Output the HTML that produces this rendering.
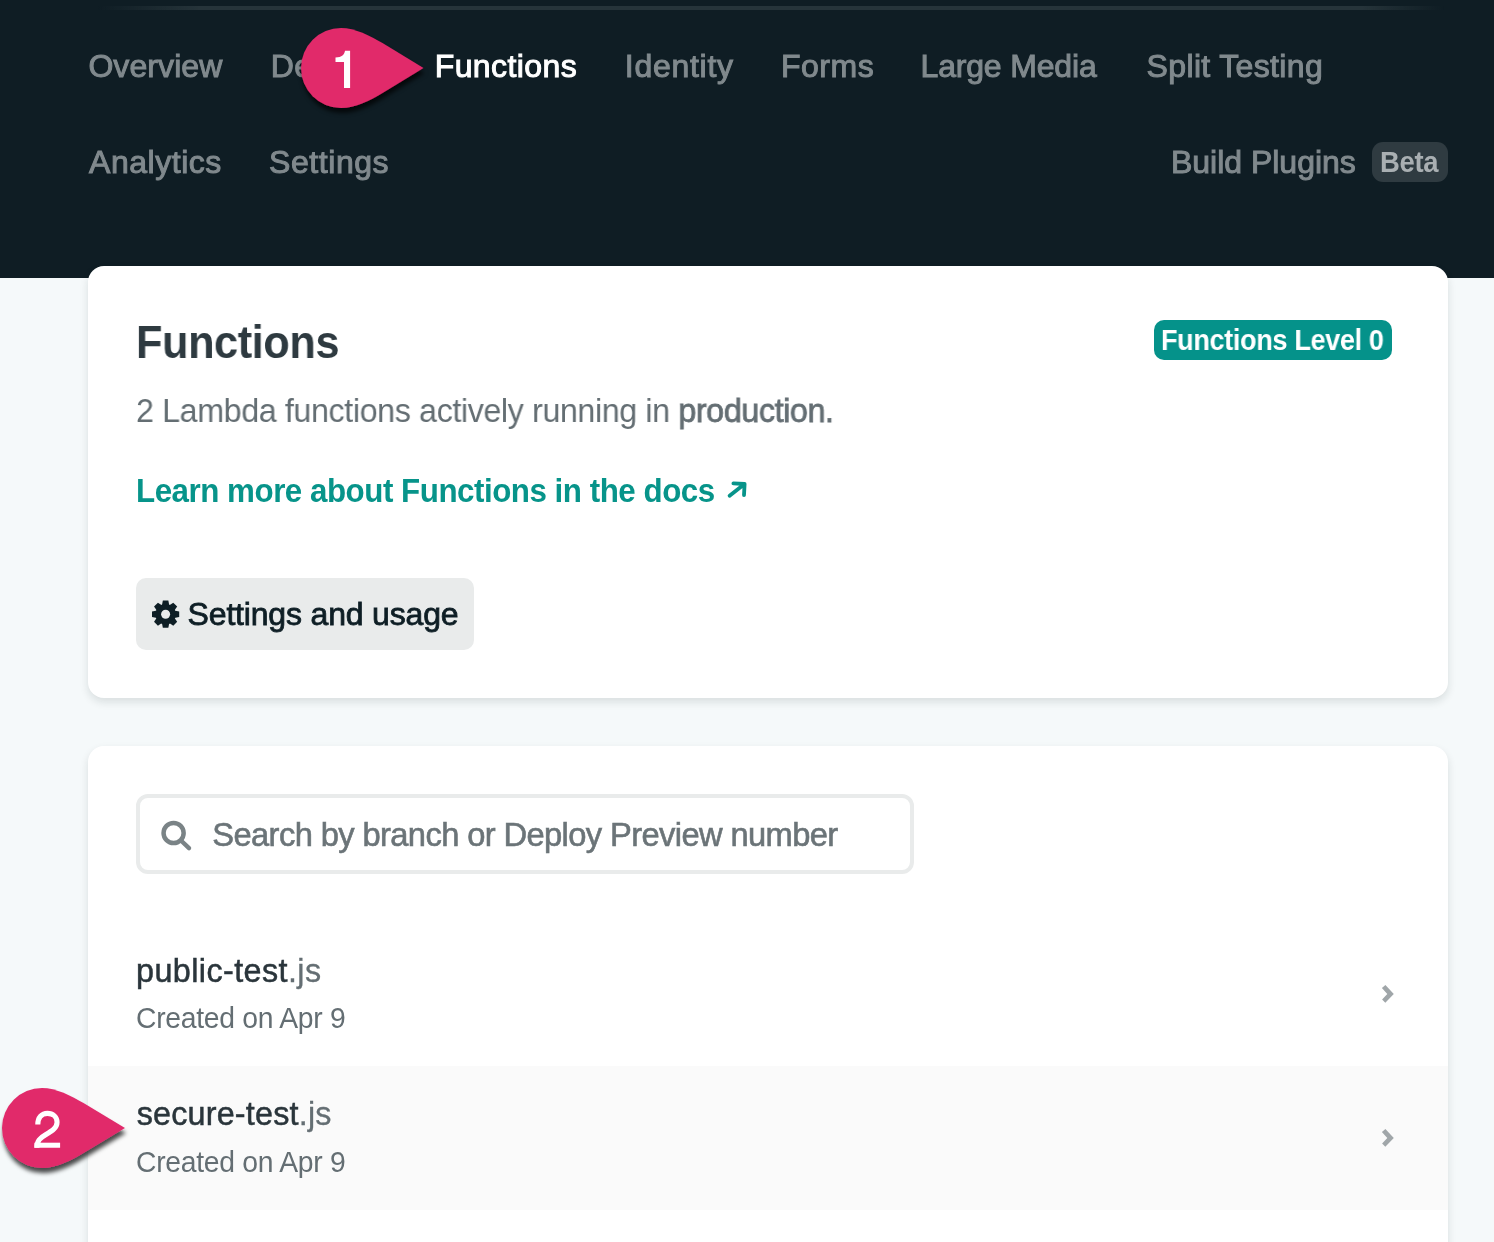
<!DOCTYPE html>
<html>
<head>
<meta charset="utf-8">
<style>
html,body{margin:0;padding:0;}
body{width:1494px;height:1242px;overflow:hidden;position:relative;background:#f5f9fa;font-family:"Liberation Sans",sans-serif;}
.a{position:absolute;white-space:nowrap;line-height:1;}
.abs{position:absolute;}
</style>
</head>
<body>
<div id="wrap" style="position:absolute;left:0;top:0;width:1494px;height:1242px;overflow:hidden;will-change:transform;">
<div class="abs" style="left:0;top:0;width:1494px;height:278px;background:#0f1d24;"></div>
<div class="abs" style="left:98px;top:6px;width:1346px;height:4px;background:linear-gradient(90deg,rgba(38,52,58,0) 0%,rgba(38,52,58,1) 7.5%,rgba(38,52,58,1) 94%,rgba(38,52,58,0) 100%);filter:blur(0.6px);"></div>
<div class="a" id="n_over" style="left:88.4px;top:50.0px;font-size:32.0px;letter-spacing:0.086px;color:#80898d;font-weight:normal;-webkit-text-stroke:1.0px #80898d;">Overview</div>
<div class="a" id="n_dep" style="left:270.7px;top:50.0px;font-size:32.0px;letter-spacing:0.383px;color:#80898d;font-weight:normal;-webkit-text-stroke:1.0px #80898d;">Deploys</div>
<div class="a" id="n_ide" style="left:624.8px;top:49.9px;font-size:32.0px;letter-spacing:0.729px;color:#80898d;font-weight:normal;-webkit-text-stroke:1.0px #80898d;">Identity</div>
<div class="a" id="n_for" style="left:781.0px;top:50.0px;font-size:32.0px;letter-spacing:0.5px;color:#80898d;font-weight:normal;-webkit-text-stroke:1.0px #80898d;">Forms</div>
<div class="a" id="n_lm" style="left:920.5px;top:50.0px;font-size:32.0px;letter-spacing:-0.17px;color:#80898d;font-weight:normal;-webkit-text-stroke:1.0px #80898d;">Large Media</div>
<div class="a" id="n_st" style="left:1146.6px;top:50.0px;font-size:32.0px;letter-spacing:0.35px;color:#80898d;font-weight:normal;-webkit-text-stroke:1.0px #80898d;">Split Testing</div>
<div class="a" id="n_ana" style="left:89.0px;top:146.4px;font-size:32.0px;letter-spacing:0.538px;color:#80898d;font-weight:normal;-webkit-text-stroke:1.0px #80898d;">Analytics</div>
<div class="a" id="n_set" style="left:269.0px;top:146.4px;font-size:32.0px;letter-spacing:0.571px;color:#80898d;font-weight:normal;-webkit-text-stroke:1.0px #80898d;">Settings</div>
<div class="a" id="n_bp" style="left:1171.0px;top:146.2px;font-size:32.0px;letter-spacing:-0.017px;color:#80898d;font-weight:normal;-webkit-text-stroke:1.0px #80898d;">Build Plugins</div>
<div class="a" id="n_fun" style="left:434.7px;top:50.0px;font-size:32.0px;letter-spacing:0.413px;color:#ffffff;font-weight:normal;-webkit-text-stroke:1.0px #ffffff;">Functions</div>
<div class="abs" style="left:1372px;top:142px;width:76px;height:40px;border-radius:11px;background:#2f3b41;"></div>
<div class="a" id="t_beta" style="left:1380.1px;top:147.9px;font-size:28.9px;letter-spacing:-0.3px;color:#a9afb2;font-weight:bold;transform:scaleX(0.95);transform-origin:0 0;">Beta</div>
<div class="abs" style="left:88px;top:266px;width:1360px;height:432px;background:#fff;border-radius:16px;box-shadow:0 4px 8px rgba(14,30,37,.12);"></div>
<div class="a" id="t_title" style="left:136.02px;top:319.9px;font-size:45.6px;letter-spacing:-0.4px;color:#2e3a40;font-weight:bold;transform:scaleX(0.9483);transform-origin:0 0;">Functions</div>
<div class="abs" style="left:1154px;top:320px;width:238px;height:40px;border-radius:10px;background:#05928a;"></div>
<div class="a" id="t_badge" style="left:1161.01px;top:325.1px;font-size:29.5px;letter-spacing:-0.4px;color:#ffffff;font-weight:bold;transform:scaleX(0.9185);transform-origin:0 0;">Functions Level 0</div>
<div class="a" id="t_desc" style="left:135.86px;top:393.9px;font-size:33.3px;letter-spacing:-0.4px;color:#646e73;font-weight:normal;transform:scaleX(0.9684);transform-origin:0 0;">2 Lambda functions actively running in <span style="-webkit-text-stroke:0.8px #646e73;">production.</span></div>
<div class="a" id="t_link" style="left:136.12px;top:473.9px;font-size:33.3px;letter-spacing:-0.5px;color:#07948a;font-weight:bold;transform:scaleX(0.9401);transform-origin:0 0;">Learn more about Functions in the docs</div>
<svg class="abs" style="left:0;top:0;overflow:visible" width="1" height="1"><path d="M729.6 495.8 L744.2 484.2 M733.4 483.4 L744.6 484 L744 495.2" fill="none" stroke="#07948a" stroke-width="3.8" stroke-linecap="round" stroke-linejoin="round"/></svg>
<div class="abs" style="left:136px;top:578px;width:338px;height:72px;border-radius:10px;background:#e9ebeb;"></div>
<svg style="position:absolute;left:0;top:0;overflow:visible" width="1" height="1"><circle cx="165.6" cy="614.2" r="10.2" fill="#0e1e25"/><polygon points="161.9,605.7 162.85,600.6 168.35,600.6 169.29999999999998,605.7" fill="#0e1e25" transform="rotate(0 165.6 614.2)"/><polygon points="161.9,605.7 162.85,600.6 168.35,600.6 169.29999999999998,605.7" fill="#0e1e25" transform="rotate(45 165.6 614.2)"/><polygon points="161.9,605.7 162.85,600.6 168.35,600.6 169.29999999999998,605.7" fill="#0e1e25" transform="rotate(90 165.6 614.2)"/><polygon points="161.9,605.7 162.85,600.6 168.35,600.6 169.29999999999998,605.7" fill="#0e1e25" transform="rotate(135 165.6 614.2)"/><polygon points="161.9,605.7 162.85,600.6 168.35,600.6 169.29999999999998,605.7" fill="#0e1e25" transform="rotate(180 165.6 614.2)"/><polygon points="161.9,605.7 162.85,600.6 168.35,600.6 169.29999999999998,605.7" fill="#0e1e25" transform="rotate(225 165.6 614.2)"/><polygon points="161.9,605.7 162.85,600.6 168.35,600.6 169.29999999999998,605.7" fill="#0e1e25" transform="rotate(270 165.6 614.2)"/><polygon points="161.9,605.7 162.85,600.6 168.35,600.6 169.29999999999998,605.7" fill="#0e1e25" transform="rotate(315 165.6 614.2)"/><circle cx="165.6" cy="614.2" r="4.5" fill="#e9ebeb"/></svg>
<div class="a" id="t_btn" style="left:187.6px;top:598.2px;font-size:32.0px;letter-spacing:-0.176px;color:#0e1e25;font-weight:normal;-webkit-text-stroke:0.8px #0e1e25;">Settings and usage</div>
<div class="abs" style="left:88px;top:746px;width:1360px;height:600px;background:#fff;border-radius:16px;box-shadow:0 4px 8px rgba(14,30,37,.12);"></div>
<div class="abs" style="left:136px;top:794px;width:770px;height:72px;border:4px solid #e9ebeb;border-radius:12px;background:#fff;"></div>
<svg class="abs" style="left:0;top:0;overflow:visible" width="1" height="1"><circle cx="173.6" cy="833" r="10.05" fill="none" stroke="#7a8386" stroke-width="4.5"/><path d="M181.5 841 L189 848.2" stroke="#7a8386" stroke-width="4.4" stroke-linecap="round"/></svg>
<div class="a" id="t_search" style="left:212.3px;top:818.7px;font-size:32.7px;letter-spacing:-0.612px;color:#6b7478;font-weight:normal;-webkit-text-stroke:0.6px #6b7478;">Search by branch or Deploy Preview number</div>
<div class="abs" style="left:88px;top:1066px;width:1360px;height:144px;background:#fafafa;"></div>
<div class="a" id="t_pub" style="left:136.0px;top:954.6px;font-size:32.3px;letter-spacing:0.431px;color:#2a353b;font-weight:normal;-webkit-text-stroke:0.5px #2a353b;">public-test<span style="color:#646e73;-webkit-text-stroke:0.3px #646e73;">.js</span></div>
<div class="a" id="t_c1" style="left:136.11px;top:1003.1px;font-size:30.0px;letter-spacing:-0.3px;color:#646e73;font-weight:normal;transform:scaleX(0.9434);transform-origin:0 0;">Created on Apr 9</div>
<div class="a" id="t_sec" style="left:136.7px;top:1098.1px;font-size:32.3px;letter-spacing:0.208px;color:#2a353b;font-weight:normal;-webkit-text-stroke:0.5px #2a353b;">secure-test<span style="color:#646e73;-webkit-text-stroke:0.3px #646e73;">.js</span></div>
<div class="a" id="t_c2" style="left:136.11px;top:1147.0px;font-size:30.0px;letter-spacing:-0.3px;color:#646e73;font-weight:normal;transform:scaleX(0.9434);transform-origin:0 0;">Created on Apr 9</div>
<svg class="abs" style="left:0;top:0;overflow:visible" width="1" height="1"><polygon points="1385.4,985 1393.8,994 1385.3,1002.8 1382.1,999.6 1387.3,994 1381.9,988.1" fill="#a0a6a9"/></svg>
<svg class="abs" style="left:0;top:0;overflow:visible" width="1" height="1"><polygon points="1385.4,1129 1393.8,1138 1385.3,1146.8 1382.1,1143.6 1387.3,1138 1381.9,1132.1" fill="#a0a6a9"/></svg>
<svg class="abs" style="left:0;top:0;overflow:visible" width="1" height="1">
<defs><filter id="sh" x="-30%" y="-30%" width="160%" height="160%"><feDropShadow dx="1" dy="5" stdDeviation="2.2" flood-color="#000" flood-opacity="0.7"/></filter></defs>
<path filter="url(#sh)" fill="#e1296b" d="M423.5 68 L382.5 43.1 C370.5 35.9 355 28 341 28 A40 40 0 0 0 341 108 C355 108 370.5 100.1 382.5 92.9 Z"/>
<path fill="#fff" d="M350.1 50.8 L345 50.8 C344.5 54.5 342 57.3 335.5 57.6 L335.5 62.1 L344 62.1 L344 88.1 L350.1 88.1 Z"/>
<path filter="url(#sh)" fill="#e1296b" d="M125 1128 L83.5 1103.1 C71.5 1095.9 56 1088 42 1088 A40 40 0 0 0 42 1168 C56 1168 71.5 1160.1 83.5 1152.9 Z"/>
</svg>
<svg class="abs" style="left:0;top:0;overflow:visible" width="1" height="1"><path d="M37.8 1124.6 C37.8 1117.5 41.8 1113.35 47.4 1113.35 C53 1113.35 57.05 1117 57.05 1122.3 C57.05 1128 52 1131 46 1134.5 C40 1138 36.9 1140.5 36.9 1147.75" fill="none" stroke="#fff" stroke-width="5.1"/><rect x="34.4" y="1142.7" width="25.7" height="5.05" fill="#fff"/></svg>
</div>
</body>
</html>
